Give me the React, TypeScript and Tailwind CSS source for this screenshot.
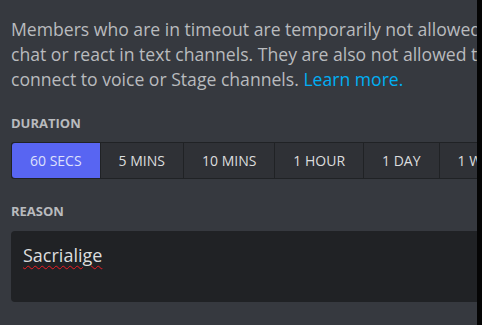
import React from "react";

const DURATIONS = ["60 SECS", "5 MINS", "10 MINS", "1 HOUR", "1 DAY", "1 WEEK"];

export default function App() {
  const selected = 0;

  return (
    <div className="flex h-[325px] w-[482px] overflow-hidden bg-[#36393f] font-['Open_Sans',sans-serif]">
      <div className="min-w-0 flex-1 overflow-hidden pl-[11px] pt-[17px]">
        {/* Description */}
        <p className="whitespace-nowrap text-[17.6px] leading-[25px] text-[#b9bbbe]">
          Members who are in timeout are temporarily not allowed to
          <br />
          chat or react in text channels. They are also not allowed to
          <br />
          connect to voice or Stage channels.{" "}
          <a className="text-[#00aff4]">Learn more.</a>
        </p>

        {/* Duration */}
        <h3 className="mt-[23px] text-[13px] font-bold uppercase leading-[16px] text-[#b9bbbe]">
          Duration
        </h3>
        <div className="mt-[11px] flex w-max gap-px rounded-[3px] bg-[#202225] p-px">
          {DURATIONS.map((d, i) => (
            <button
              key={d}
              className={`h-[35px] whitespace-nowrap px-[18px] text-[14px] leading-[35px] ${
                i === selected
                  ? "rounded-l-[3px] bg-[#5865f2] text-[#dee0fc]"
                  : "bg-[#2f3136] text-[#dcddde]"
              }`}
            >
              {d}
            </button>
          ))}
        </div>

        {/* Reason */}
        <h3 className="mt-[24px] text-[13px] font-bold uppercase leading-[16px] text-[#b9bbbe]">
          Reason
        </h3>
        <div className="mt-[12px] h-[71px] w-[520px] rounded-[4px] bg-[#202225] px-[12px] pt-[12px]">
          <span className="text-[18px] leading-[24px] text-[#dcddde] underline decoration-[#ed1c24] decoration-wavy decoration-1 underline-offset-[3px]">
            Sacrialige
          </span>
        </div>
      </div>
      <div className="w-[5px] shrink-0 bg-[#050505]" />
    </div>
  );
}
